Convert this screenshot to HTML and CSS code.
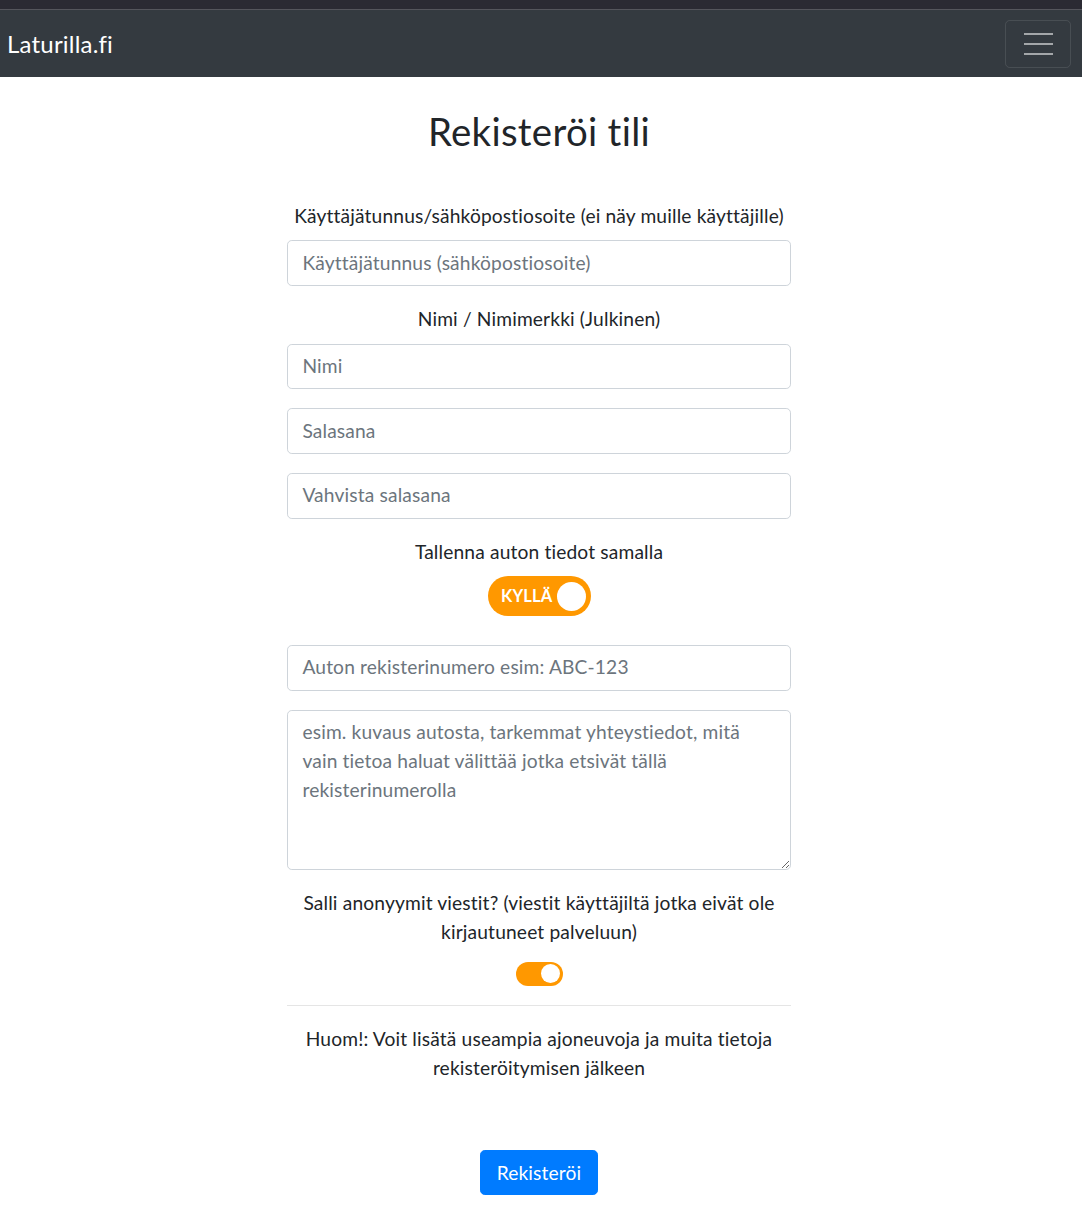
FILE: index.html
```html
<!DOCTYPE html>
<html lang="fi">
<head>
<meta charset="utf-8">
<title>Laturilla.fi</title>
<link rel="stylesheet" href="styles.css">
</head>
<body>
<div class="chrome"></div>
<nav class="navbar">
  <a class="brand" href="#">Laturilla.fi</a>
  <button class="toggler" type="button" aria-label="Valikko">
    <span class="toggler-bar"></span>
    <span class="toggler-bar"></span>
    <span class="toggler-bar"></span>
  </button>
</nav>
<main class="page">
  <h2 class="title">Rekisteröi tili</h2>
  <form class="form">
    <div class="group">
      <label class="label">Käyttäjätunnus/sähköpostiosoite (ei näy muille käyttäjille)</label>
      <input class="input" type="text" placeholder="Käyttäjätunnus (sähköpostiosoite)">
    </div>
    <div class="group">
      <label class="label">Nimi / Nimimerkki (Julkinen)</label>
      <input class="input" type="text" placeholder="Nimi">
    </div>
    <div class="group">
      <input class="input" type="password" placeholder="Salasana">
    </div>
    <div class="group">
      <input class="input" type="password" placeholder="Vahvista salasana">
    </div>
    <div class="group group-toggle">
      <label class="label">Tallenna auton tiedot samalla</label>
      <div class="big-toggle"><span class="big-toggle-text">KYLLÄ</span><span class="big-toggle-knob"></span></div>
    </div>
    <div class="group">
      <input class="input" type="text" placeholder="Auton rekisterinumero esim: ABC-123">
    </div>
    <div class="group">
      <textarea class="input textarea" rows="5" placeholder="esim. kuvaus autosta, tarkemmat yhteystiedot, mitä vain tietoa haluat välittää jotka etsivät tällä rekisterinumerolla"></textarea>
    </div>
    <div class="group group-switch">
      <label class="label label-switch">Salli anonyymit viestit? (viestit käyttäjiltä jotka eivät ole kirjautuneet palveluun)</label>
      <div class="switch"><span class="switch-knob"></span></div>
    </div>
    <hr class="divider">
    <p class="note">Huom!: Voit lisätä useampia ajoneuvoja ja muita tietoja rekisteröitymisen jälkeen</p>
    <div class="actions">
      <button class="btn" type="button">Rekisteröi</button>
    </div>
  </form>
</main>
</body>
</html>
```

FILE: styles.css
```css
* { box-sizing: border-box; }

html, body {
  margin: 0;
  padding: 0;
  background: #fff;
}

body {
  font-family: Lato, "Noto Sans", sans-serif;
  font-size: 19.2px;
  line-height: 1.5;
  color: #212529;
  font-variant-ligatures: none;
  letter-spacing: 0.15px;
}

.chrome {
  height: 10px;
  background: #2b2a33;
  border-bottom: 1px solid #55555c;
}

.navbar {
  height: 67px;
  background: #343a40;
  display: flex;
  align-items: center;
  justify-content: space-between;
  padding: 0 11px 0 7px;
}

.brand {
  color: #fff;
  text-decoration: none;
  font-size: 24px;
  line-height: 1;
  padding-top: 0;
  letter-spacing: 0.2px;
}

.toggler {
  width: 66px;
  height: 48px;
  margin-top: 1px;
  background: transparent;
  border: 1px solid rgba(255, 255, 255, 0.1);
  border-radius: 4.8px;
  display: flex;
  flex-direction: column;
  align-items: center;
  justify-content: center;
  gap: 8px;
  padding: 0;
}

.toggler-bar {
  display: block;
  width: 29px;
  height: 2px;
  background: rgba(255, 255, 255, 0.55);
}

.page {
  padding: 0 19px 0 15px;
}

.title {
  margin: 31px 0 48px;
  text-align: center;
  font-size: 38.4px;
  font-weight: 400;
  line-height: 1.2;
  letter-spacing: 0.3px;
}

.form {
  width: 504px;
  margin: 0 auto;
}

.group {
  margin-bottom: 19.2px;
  display: flex;
  flex-direction: column;
  align-items: center;
}

.group-toggle { margin-bottom: 29px; }

.label {
  display: block;
  text-align: center;
  margin-bottom: 9.6px;
}

.label-switch { margin-bottom: 15px; }

.input {
  display: block;
  width: 100%;
  height: 45.6px;
  padding: 6px 14.4px 8.4px;
  font-family: inherit;
  font-size: 19.2px;
  line-height: 1.5;
  letter-spacing: 0.15px;
  color: #495057;
  background: #fff;
  border: 1px solid #ced4da;
  border-radius: 4.8px;
  font-variant-ligatures: none;
}

.input::placeholder { color: #6c757d; opacity: 1; }

.textarea {
  height: 160px;
  padding-top: 7.2px;
  padding-bottom: 7.2px;
  resize: vertical;
}

.big-toggle {
  width: 103px;
  height: 40px;
  border-radius: 20px;
  background: #ff9800;
  display: flex;
  align-items: center;
  justify-content: flex-end;
  gap: 4px;
  padding-right: 5px;
}

.big-toggle-text {
  color: #fff;
  font-weight: 700;
  font-size: 16.5px;
  line-height: 1;
  letter-spacing: 0.2px;
}

.big-toggle-knob {
  width: 29px;
  height: 29px;
  border-radius: 50%;
  background: #fff;
}

.group-switch { margin-bottom: 0; }

.switch {
  width: 47px;
  height: 24px;
  border-radius: 12px;
  background: #ff9800;
  display: flex;
  align-items: center;
  justify-content: flex-end;
  padding-right: 3px;
}

.switch-knob {
  width: 19px;
  height: 19px;
  border-radius: 50%;
  background: #fff;
}

.divider {
  margin: 19px 0;
  border: 0;
  border-top: 1px solid rgba(0, 0, 0, 0.1);
}

.note {
  margin: 0;
  text-align: center;
}

.actions {
  display: flex;
  justify-content: center;
  margin-top: 67px;
}

.btn {
  height: 45.6px;
  padding: 0 15.5px;
  font-family: inherit;
  font-size: 19.2px;
  letter-spacing: 0.15px;
  color: #fff;
  background: #007bff;
  border: 1px solid #007bff;
  border-radius: 4.8px;
}
```
